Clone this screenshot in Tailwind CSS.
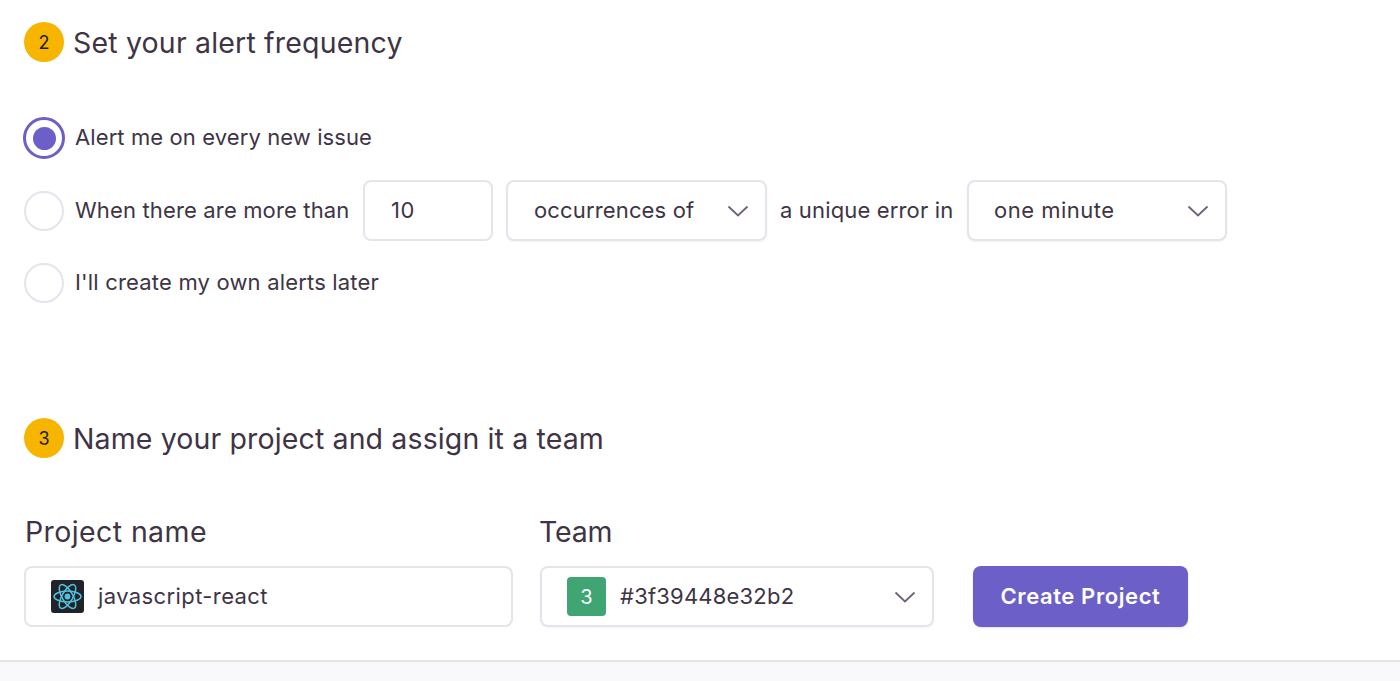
<!DOCTYPE html>
<html>
<head>
<meta charset="utf-8">
<script src="https://cdn.jsdelivr.net/npm/@tailwindcss/browser@4"></script>
</head>
<body class="bg-white overflow-hidden">
<div class="h-[681px] w-[1400px] flex flex-col font-['Inter','Noto_Sans',sans-serif] text-[#3e3446] antialiased">
  <main class="h-[660px] pl-6 pt-[22px] flex flex-col">
    <div class="flex items-center gap-[9px] h-10">
      <span class="w-10 h-10 rounded-full bg-[#f7b500] text-[#1f1a24] flex items-center justify-center text-[18px]">2</span>
      <h2 class="text-[28.5px] tracking-[0.18px] pt-[3px]">Set your alert frequency</h2>
    </div>

    <div class="mt-[56px] flex flex-col">
      <label class="flex items-center h-10 text-[22px] tracking-[0.1px]">
        <span class="w-[42px] h-[42px] -ml-px rounded-full border-[3px] border-[#6c5fc7] flex items-center justify-center shrink-0"><span class="w-[23px] h-[23px] rounded-full bg-[#6c5fc7]"></span></span>
        <span class="ml-[10px] pb-[2px]">Alert me on every new issue</span>
      </label>
      <div class="flex items-center h-[61px] mt-[22px] text-[22px] tracking-[0.15px]">
        <span class="w-10 h-10 rounded-full border-2 border-[#e6e3ec] shrink-0"></span>
        <span class="ml-[11px] w-[288px]">When there are more than</span>
        <div class="w-[130px] h-[61px] rounded-lg border-2 border-[#e6e3ec] flex items-center pl-[26px] tracking-[0.5px]">10</div>
        <div class="ml-[13px] w-[261px] h-[61px] rounded-lg border-2 border-[#e6e3ec] shadow-[0_1px_2px_rgba(62,52,70,0.06)] flex items-center justify-between pl-[26px] pr-[16px]">
          <span>occurrences of</span>
          <svg class="w-[22px] h-[12px]" viewBox="0 0 22 12" fill="none" stroke="#6f6179" stroke-width="1.8"><path d="M1.5 1.5 L11 10.5 L20.5 1.5"/></svg>
        </div>
        <span class="ml-[13px] w-[187px]">a unique error in</span>
        <div class="w-[260px] h-[61px] rounded-lg border-2 border-[#e6e3ec] shadow-[0_1px_2px_rgba(62,52,70,0.06)] flex items-center justify-between pl-[25px] pr-[16px]">
          <span class="tracking-[0.5px]">one minute</span>
          <svg class="w-[22px] h-[12px]" viewBox="0 0 22 12" fill="none" stroke="#6f6179" stroke-width="1.8"><path d="M1.5 1.5 L11 10.5 L20.5 1.5"/></svg>
        </div>
      </div>
      <label class="flex items-center gap-[11px] h-10 mt-[22px] text-[22px] tracking-[0.18px]">
        <span class="w-10 h-10 rounded-full border-2 border-[#e6e3ec]"></span>
        <span class="pb-[2px]">I'll create my own alerts later</span>
      </label>
    </div>

    <div class="flex items-center gap-[9px] h-10 mt-[115px]">
      <span class="w-10 h-10 rounded-full bg-[#f7b500] text-[#1f1a24] flex items-center justify-center text-[18px]">3</span>
      <h2 class="text-[28.5px] tracking-[0.13px] pt-[3px]">Name your project and assign it a team</h2>
    </div>

    <div class="flex items-end mt-[56px]">
      <div class="w-[489px] flex flex-col">
        <label class="text-[28.5px] tracking-[0.4px] h-[36px] leading-[36px] mb-[16px] ml-px">Project name</label>
        <div class="h-[61px] rounded-lg border-2 border-[#e6e3ec] flex items-center pl-[25px] text-[22px] tracking-[0.4px]">
          <svg class="w-[33px] h-[33px] shrink-0" viewBox="0 0 33 33">
            <rect width="33" height="33" rx="3" fill="#20232a"/>
            <g fill="none" stroke="#53c1de" stroke-width="1.5">
              <ellipse cx="16.5" cy="16.5" rx="13.5" ry="5.4"/>
              <ellipse cx="16.5" cy="16.5" rx="13.5" ry="5.4" transform="rotate(60 16.5 16.5)"/>
              <ellipse cx="16.5" cy="16.5" rx="13.5" ry="5.4" transform="rotate(120 16.5 16.5)"/>
            </g>
            <circle cx="16.5" cy="16.5" r="2.9" fill="#53c1de"/>
          </svg>
          <span class="ml-[14px]">javascript-react</span>
        </div>
      </div>
      <div class="w-[394px] ml-[27px] flex flex-col">
        <label class="text-[28.5px] -tracking-[0.2px] h-[36px] leading-[36px] mb-[16px] -ml-px">Team</label>
        <div class="h-[61px] rounded-lg border-2 border-[#e6e3ec] shadow-[0_1px_2px_rgba(62,52,70,0.06)] flex items-center pl-[25px] pr-[16px] text-[22px] tracking-[0.2px]">
          <span class="w-[39px] h-[39px] rounded bg-[#3ea573] text-white flex items-center justify-center text-[20px] shrink-0">3</span>
          <span class="ml-[14px] flex-1">#3f39448e32b2</span>
          <svg class="w-[22px] h-[12px]" viewBox="0 0 22 12" fill="none" stroke="#6f6179" stroke-width="1.8"><path d="M1.5 1.5 L11 10.5 L20.5 1.5"/></svg>
        </div>
      </div>
      <button class="ml-[39px] w-[215px] h-[61px] rounded-lg bg-[#6c5fc7] text-white text-[22px] tracking-[0.6px] font-semibold shadow-sm">Create Project</button>
    </div>
  </main>
  <footer class="h-[21px] border-t-2 border-[#e6e3ec] bg-[#f9f9fb]"></footer>
</div>
</body>
</html>
